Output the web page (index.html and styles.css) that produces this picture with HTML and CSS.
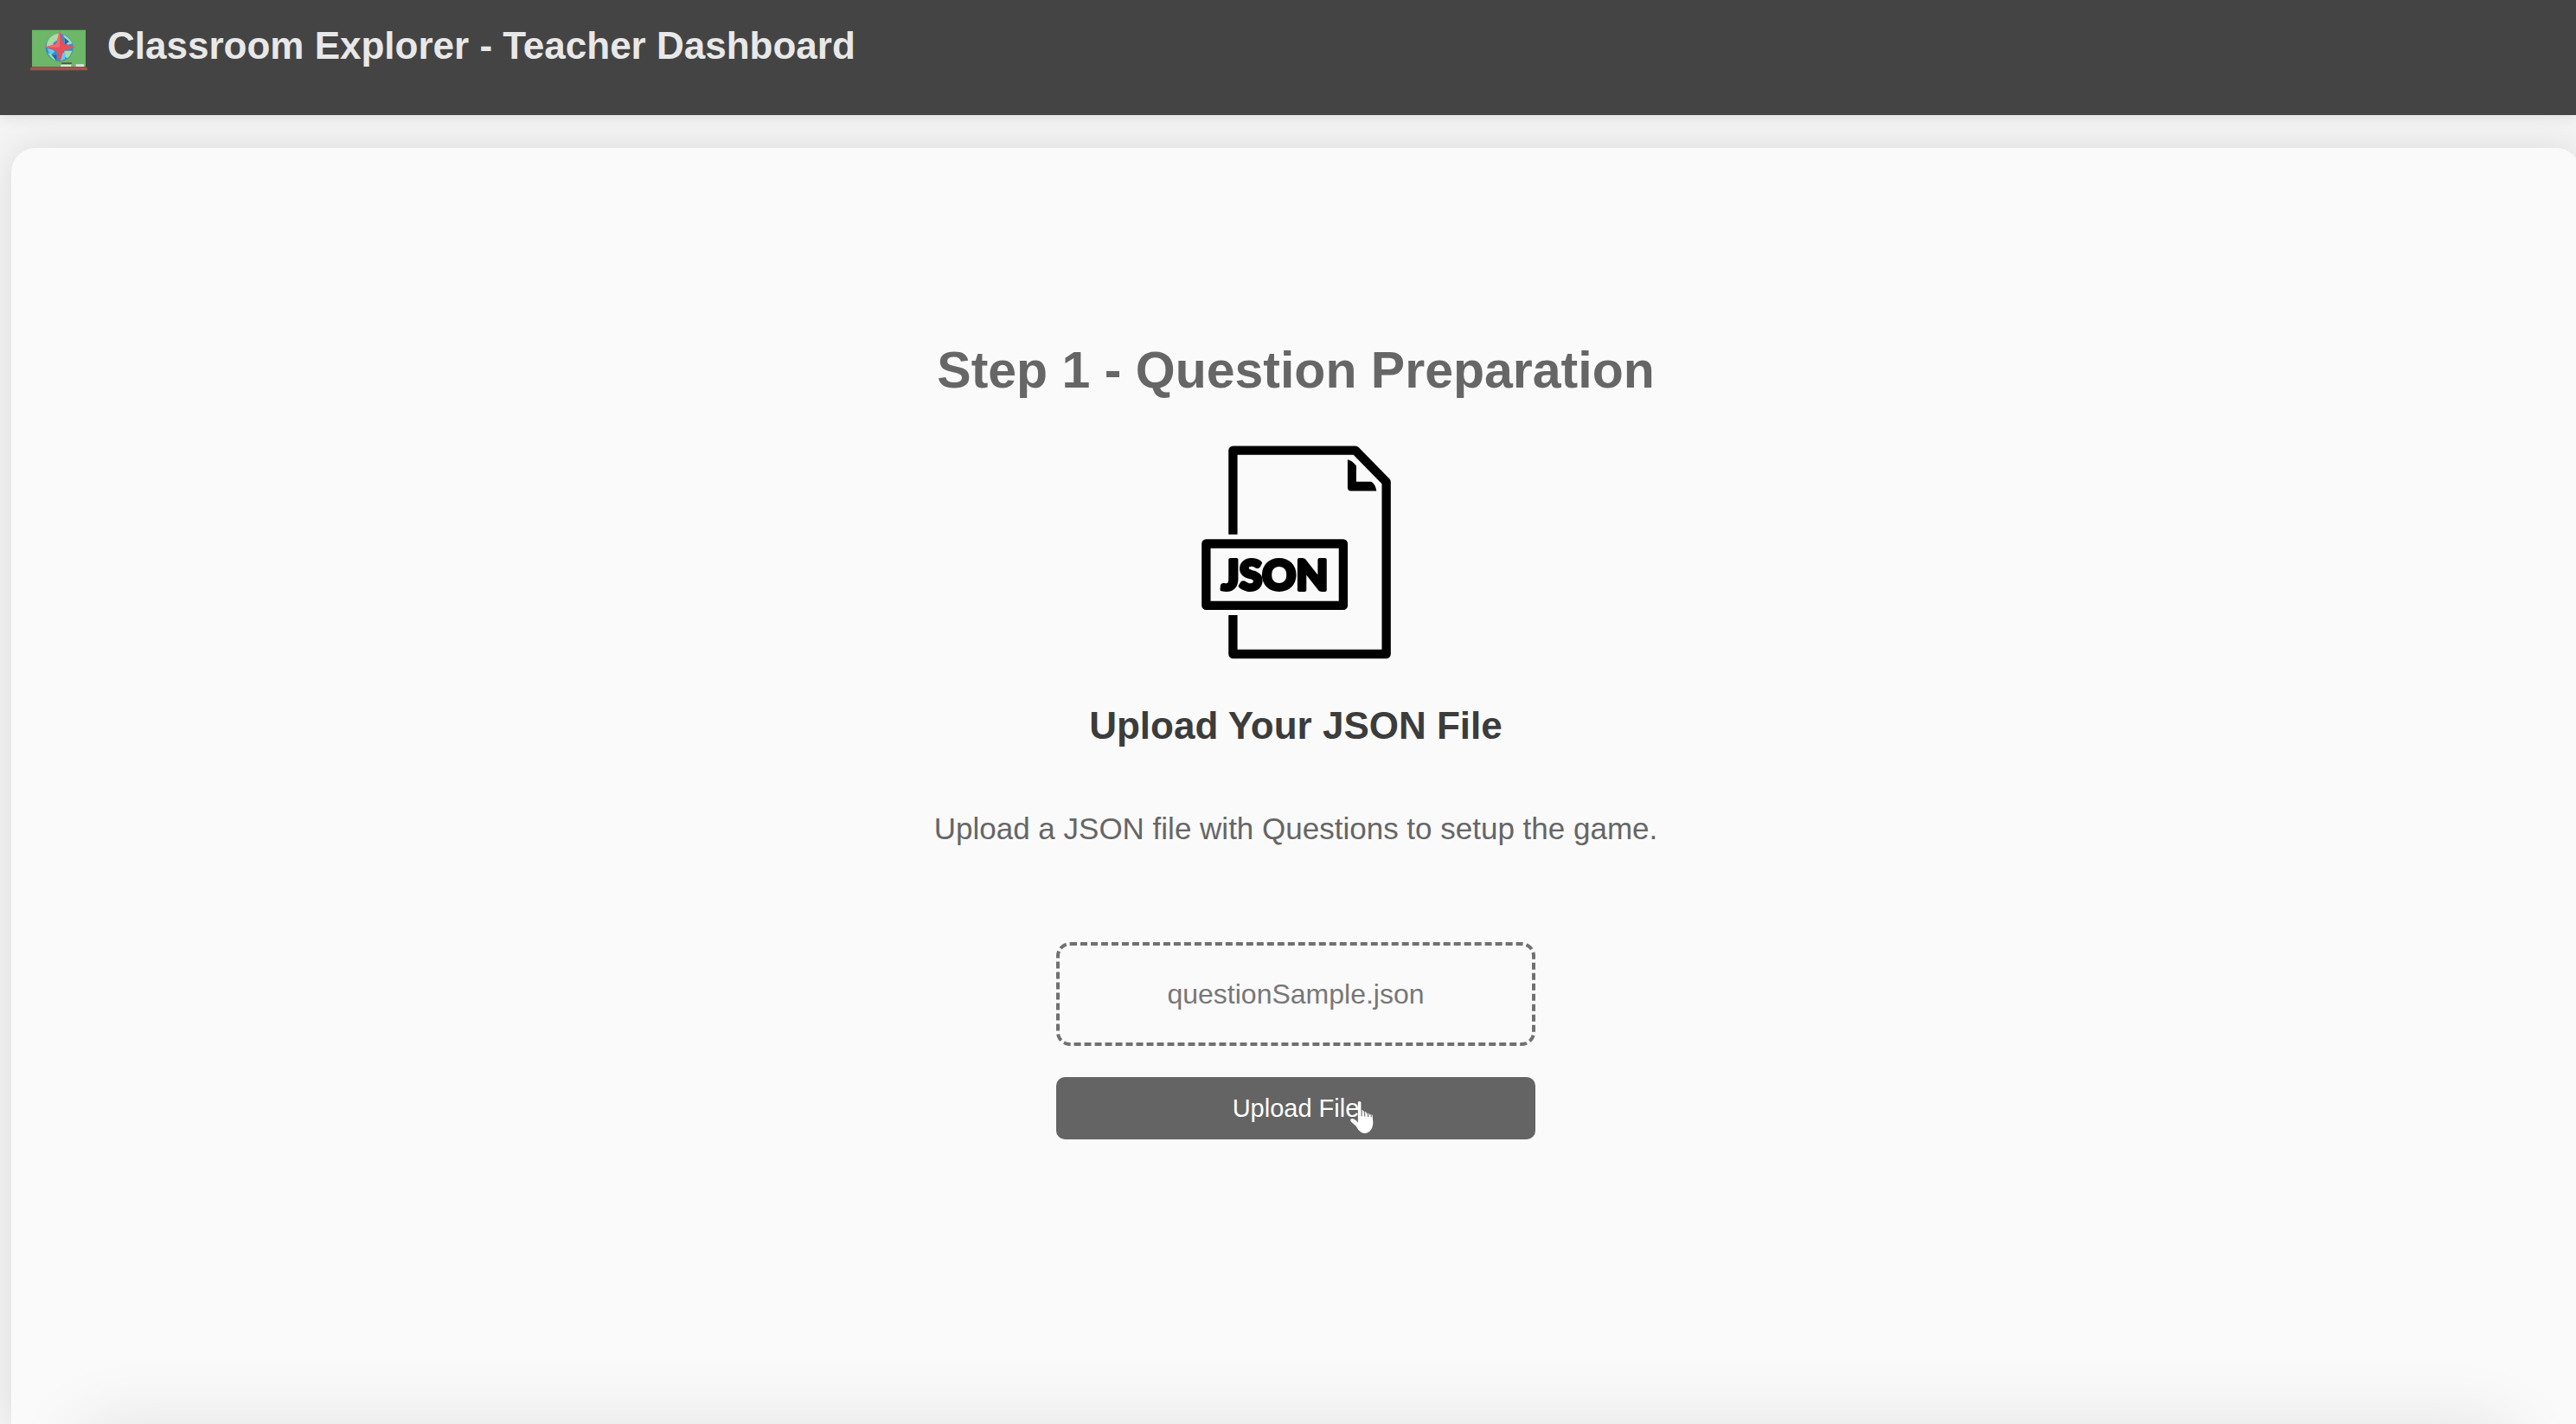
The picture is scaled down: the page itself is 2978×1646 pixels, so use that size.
FILE: index.html
```html
<!DOCTYPE html>
<html lang="en">
<head>
<meta charset="utf-8">
<meta name="viewport" content="width=device-width, initial-scale=1">
<title>Classroom Explorer - Teacher Dashboard</title>
<link rel="stylesheet" href="styles.css">
</head>
<body>
<header class="topbar">
  <svg class="logo" viewBox="0 0 198 144" aria-hidden="true">
    <rect x="6" y="2" width="186" height="128" fill="#6cb768"/>
    <circle cx="101" cy="63" r="48" fill="#2f8fd8"/>
    <path d="M70 27q14-13 30-12l-4 20-15 11-6 17-19-4q1-19 14-32zM115 18q22 10 31 31l-15 4-12-10zM118 74l27 0q-5 17-17 26l-10-8zM61 82l20 6 7 20q-18-8-27-26z" fill="#a8dca0"/>
    <path d="M60 55l18 6 6 18-14 8q-12-14-10-32zM109 78l14 7-3 18-17 7z" fill="#62cbf5"/>
    <path d="M73 87l19 2-2 19zM117 27l18 16-14 9z" fill="#1f63b4"/>
    <path d="M102 4l13 46 40 12-40 13-13 43-12-43-41-13 41-12z" fill="#e84f5b"/>
    <path d="M102 4v58H49l41-12z" fill="#f06a70"/>
    <path d="M108 115h36v5h-36z" fill="#4b5648"/>
    <path d="M106 122h36v7h-36zM158 121h28v8h-28z" fill="#e2e5df"/>
    <rect x="0" y="132" width="198" height="10" rx="2" fill="#a4534a"/>
  </svg>
  <h1 class="brand">Classroom Explorer - Teacher Dashboard</h1>
</header>
<main class="card">
  <h2 class="step">Step 1 - Question Preparation</h2>
  <svg class="json-icon" viewBox="58 44 656 740" role="img" aria-label="JSON file">
    <g fill="none" stroke="#000" stroke-width="31" stroke-linejoin="round">
      <path d="M167 352V61H591L698 170V766H167V631"/>
      <rect x="74" y="384" width="475" height="214"/>
    </g>
    <path d="M564 93q14 2 30 21v55h52q14 8 18 32h-88q-12 0-12-12z"/>
    <text class="json-text" x="312" y="543" text-anchor="middle">JSON</text>
  </svg>
  <h3 class="upload-title">Upload Your JSON File</h3>
  <p class="hint">Upload a JSON file with Questions to setup the game.</p>
  <form class="upload-form">
    <input class="file-input" type="file" id="question-file" accept=".json">
    <label class="drop-zone" for="question-file">questionSample.json</label>
    <button class="upload-button" type="button">Upload File
      <svg class="pointer" viewBox="0 0 80 112" aria-hidden="true">
        <path d="M27 5q6-5 10 1v27q4-4 9 1v5q5-5 9 0v4q5-4 9 0v4q5-4 10 0l2 25q-1 19-12 29-13 10-27 2-10-7-16-20L5 69q-6-9 3-10 9 0 19 13z" fill="#fff"/>
        <path d="M39 32v19M49 37v15M60 41v12M70 45v9" fill="none" stroke="#646464" stroke-width="3"/>
      </svg>
    </button>
  </form>
</main>
</body>
</html>
```
FILE: styles.css
```css
* {
  box-sizing: border-box;
}

body {
  margin: 0;
  min-height: 100vh;
  display: flex;
  flex-direction: column;
  overflow: hidden;
  background: #f4f4f4;
  font-family: "Liberation Sans", Arial, sans-serif;
}

h1,
h2,
h3,
p {
  margin: 0;
}

.topbar {
  display: flex;
  align-items: flex-start;
  gap: 23px;
  padding: 27px 35px 51px;
  background: #444;
  box-shadow: 0 2px 16px rgba(0, 0, 0, 0.1);
}

.logo {
  width: 66px;
  height: 48px;
  margin-top: 7px;
}

.brand {
  color: #e8e8e8;
  font-size: 44px;
  line-height: 52px;
}

.card {
  position: relative;
  flex: 1;
  display: flex;
  flex-direction: column;
  align-items: center;
  margin: 38px -5px 0 13px;
  padding: 221px 24px 0;
  border-radius: 28px 28px 0 0;
  background: #fafafa;
  box-shadow: 0 0 40px rgba(0, 0, 0, 0.1);
}

.card::after {
  content: "";
  position: absolute;
  top: 100%;
  left: 72px;
  right: 72px;
  height: 80px;
  border-radius: 40px;
  box-shadow: 0 0 80px rgba(0, 0, 0, 0.1);
}

.step {
  color: #666;
  font-size: 59px;
  line-height: 72px;
}

.json-icon {
  width: 219px;
  height: 247px;
  margin-top: 51px;
}

.json-text {
  font-family: Lato, "Liberation Sans", sans-serif;
  font-size: 144px;
  font-weight: 900;
  stroke: #000;
  stroke-width: 12px;
  stroke-linejoin: round;
}

.upload-title {
  margin-top: 51px;
  color: #3c3c3c;
  font-size: 44px;
  line-height: 52px;
}

.hint {
  margin-top: 71px;
  color: #666;
  font-size: 35px;
  line-height: 44px;
}

.upload-form {
  position: relative;
  display: flex;
  flex-direction: column;
  gap: 36px;
  width: 554px;
  max-width: 100%;
  margin-top: 109px;
}

.file-input {
  position: absolute;
  inset: 0;
  width: 100%;
  height: 120px;
  opacity: 0;
}

.drop-zone {
  padding: 36px 24px;
  border: 4px dashed #707070;
  border-radius: 16px;
  color: #777;
  font-size: 32px;
  line-height: 40px;
  text-align: center;
}

.upload-button {
  position: relative;
  padding: 18px 24px;
  border: 0;
  border-radius: 10px;
  background: #646464;
  color: #fff;
  font-family: inherit;
  font-size: 29px;
  line-height: 36px;
  cursor: pointer;
}

.pointer {
  position: absolute;
  top: 27px;
  left: calc(50% + 62px);
  width: 29px;
  height: 40px;
}
```
